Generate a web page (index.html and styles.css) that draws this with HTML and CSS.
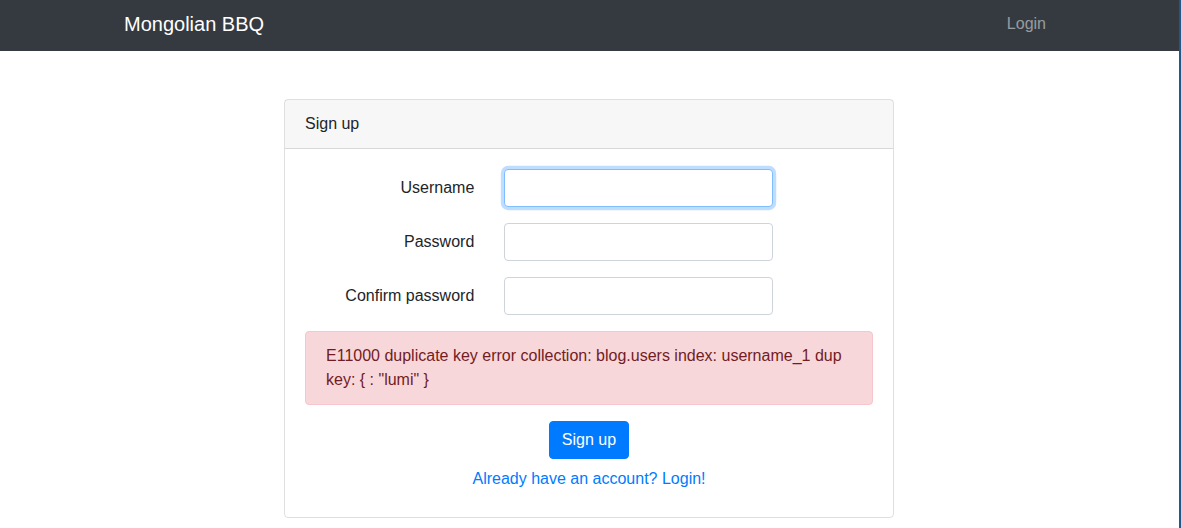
FILE: index.html
```html
<!DOCTYPE html>
<html lang="en">
<head>
<meta charset="utf-8">
<title>Mongolian BBQ</title>
<link rel="stylesheet" href="styles.css">
</head>
<body>
<nav class="navbar">
  <div class="container nav-inner">
    <a class="brand" href="#">Mongolian BBQ</a>
    <a class="nav-link" href="#">Login</a>
  </div>
</nav>
<main class="container">
  <div class="card">
    <div class="card-header">Sign up</div>
    <div class="card-body">
      <form>
        <div class="form-row">
          <label class="form-label">Username</label>
          <div class="form-field"><input class="form-input is-focused" type="text"></div>
        </div>
        <div class="form-row">
          <label class="form-label">Password</label>
          <div class="form-field"><input class="form-input" type="password"></div>
        </div>
        <div class="form-row">
          <label class="form-label">Confirm password</label>
          <div class="form-field"><input class="form-input" type="password"></div>
        </div>
        <div class="alert">E11000 duplicate key error collection: blog.users index: username_1 dup key: { : "lumi" }</div>
        <div class="actions">
          <button class="btn" type="button">Sign up</button>
        </div>
        <div class="alt-link"><a href="#">Already have an account? Login!</a></div>
      </form>
    </div>
  </div>
</main>
</body>
</html>
```
FILE: styles.css
```css
* { box-sizing: border-box; }
html {
  border-right: 2px solid #1f5a8a;
  min-height: 100%;
}
body {
  margin: 0;
  font-family: "Liberation Sans", Arial, sans-serif;
  font-size: 16px;
  line-height: 1.5;
  color: #212529;
  background: #fff;
}
a { text-decoration: none; }
.container {
  width: 960px;
  margin: 0 0 0 calc(50% - 480.5px);
  padding: 0 15px;
}
.navbar {
  background: #343a40;
  height: 51px;
  padding-bottom: 4px;
}
.nav-inner {
  height: 47px;
  display: flex;
  align-items: center;
  justify-content: space-between;
}
.brand {
  color: #fff;
  font-size: 20px;
  line-height: 30px;
}
.nav-link {
  color: rgba(255,255,255,.5);
  padding: 0 8px;
  line-height: 24px;
}
.card {
  margin: 48px 0 0 160px;
  width: 610px;
  border: 1px solid rgba(0,0,0,.125);
  border-radius: 4px;
}
.card-header {
  background: rgba(0,0,0,.03);
  padding: 12px 20px;
  border-bottom: 1px solid rgba(0,0,0,.125);
}
.card-body {
  padding: 20px 20px 26px;
}
.form-row {
  display: grid;
  grid-template-columns: 169.3px 269px;
  column-gap: 30px;
  margin-bottom: 16px;
}
.form-label {
  text-align: right;
  padding-top: 7px;
  padding-bottom: 7px;
}
.form-input {
  display: block;
  width: 100%;
  height: 38px;
  padding: 6px 12px;
  font: inherit;
  color: #495057;
  background: #fff;
  border: 1px solid #ced4da;
  border-radius: 4px;
  outline: none;
}
.form-input.is-focused {
  border-color: #80bdff;
  box-shadow: 0 0 0 3.2px rgba(0,123,255,.25);
}
.alert {
  padding: 12px 20px;
  margin-bottom: 16px;
  background: #f8d7da;
  border: 1px solid #f5c6cb;
  border-radius: 4px;
  color: #721c24;
}
.actions {
  display: flex;
  justify-content: center;
}
.btn {
  font: inherit;
  color: #fff;
  background: #007bff;
  border: 1px solid #007bff;
  border-radius: 4px;
  padding: 6px 12px;
  line-height: 24px;
}
.alt-link {
  text-align: center;
  margin-top: 8px;
}
.alt-link a { color: #007bff; }
```
